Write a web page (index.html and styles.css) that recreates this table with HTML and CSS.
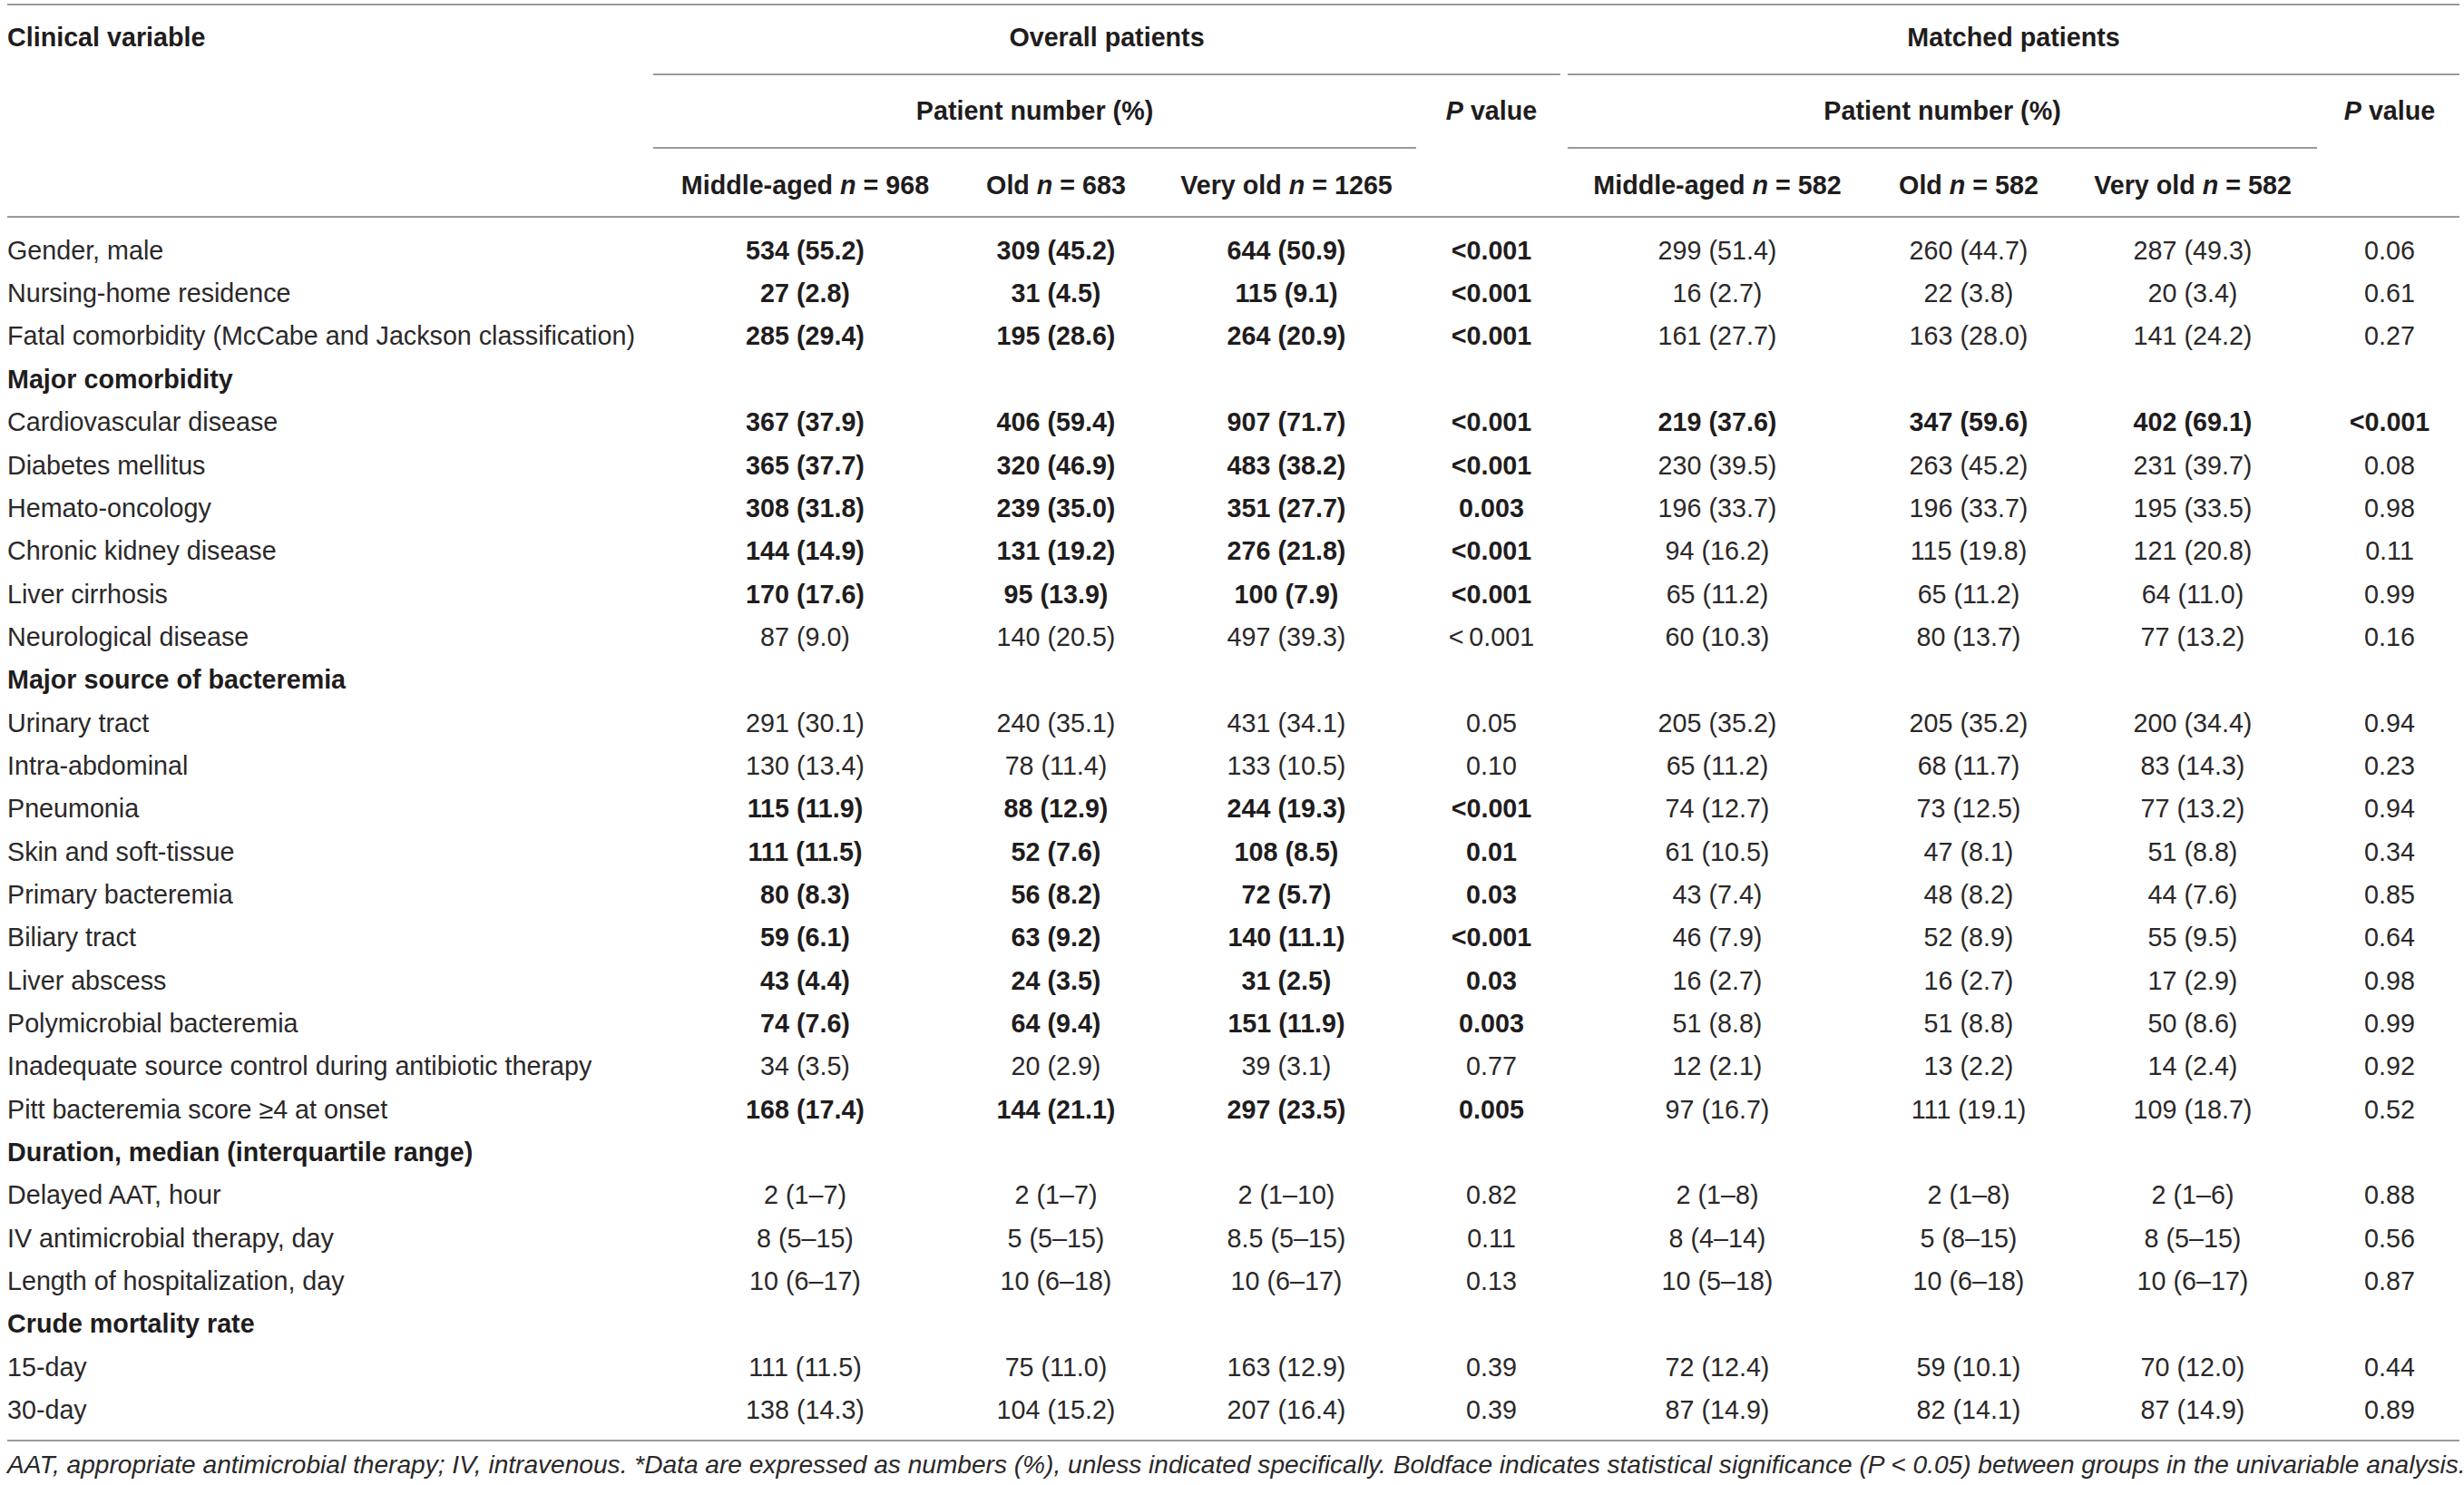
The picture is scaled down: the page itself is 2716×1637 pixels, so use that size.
FILE: index.html
```html
<!DOCTYPE html>
<html lang="en">
<head>
<meta charset="utf-8">
<title>Clinical variables table</title>
<link rel="stylesheet" href="styles.css">
</head>
<body>
<div class="page">
<table class="t">
  <colgroup>
    <col class="c-lbl"><col class="c2"><col class="c3"><col class="c4"><col class="c5">
    <col class="c6"><col class="c7"><col class="c8"><col class="c9">
  </colgroup>
  <thead>
    <tr class="r1">
      <th rowspan="3" class="lbl-h">Clinical variable</th>
      <th colspan="4" class="grp grp-o"><div class="line">Overall patients</div></th>
      <th colspan="4" class="grp grp-m"><div class="line">Matched patients</div></th>
    </tr>
    <tr class="r2">
      <th colspan="3" class="pn pn-o"><div class="line">Patient number (%)</div></th>
      <th rowspan="2" class="pv"><i>P</i> value</th>
      <th colspan="3" class="pn pn-m"><div class="line">Patient number (%)</div></th>
      <th rowspan="2" class="pv"><i>P</i> value</th>
    </tr>
    <tr class="sub">
      <th>Middle-aged <i>n</i> = 968</th>
      <th>Old <i>n</i> = 683</th>
      <th>Very old <i>n</i> = 1265</th>
      <th>Middle-aged <i>n</i> = 582</th>
      <th>Old <i>n</i> = 582</th>
      <th>Very old <i>n</i> = 582</th>
    </tr>
  </thead>
  <tbody>
    <tr class="first"><td class="l">Gender, male</td><td class="s">534 (55.2)</td><td class="s">309 (45.2)</td><td class="s">644 (50.9)</td><td class="s">&lt;0.001</td><td>299 (51.4)</td><td>260 (44.7)</td><td>287 (49.3)</td><td>0.06</td></tr>
    <tr><td class="l">Nursing-home residence</td><td class="s">27 (2.8)</td><td class="s">31 (4.5)</td><td class="s">115 (9.1)</td><td class="s">&lt;0.001</td><td>16 (2.7)</td><td>22 (3.8)</td><td>20 (3.4)</td><td>0.61</td></tr>
    <tr><td class="l">Fatal comorbidity (McCabe and Jackson classification)</td><td class="s">285 (29.4)</td><td class="s">195 (28.6)</td><td class="s">264 (20.9)</td><td class="s">&lt;0.001</td><td>161 (27.7)</td><td>163 (28.0)</td><td>141 (24.2)</td><td>0.27</td></tr>
    <tr class="sec"><td class="l">Major comorbidity</td><td></td><td></td><td></td><td></td><td></td><td></td><td></td><td></td></tr>
    <tr><td class="l">Cardiovascular disease</td><td class="s">367 (37.9)</td><td class="s">406 (59.4)</td><td class="s">907 (71.7)</td><td class="s">&lt;0.001</td><td class="s">219 (37.6)</td><td class="s">347 (59.6)</td><td class="s">402 (69.1)</td><td class="s">&lt;0.001</td></tr>
    <tr><td class="l">Diabetes mellitus</td><td class="s">365 (37.7)</td><td class="s">320 (46.9)</td><td class="s">483 (38.2)</td><td class="s">&lt;0.001</td><td>230 (39.5)</td><td>263 (45.2)</td><td>231 (39.7)</td><td>0.08</td></tr>
    <tr><td class="l">Hemato-oncology</td><td class="s">308 (31.8)</td><td class="s">239 (35.0)</td><td class="s">351 (27.7)</td><td class="s">0.003</td><td>196 (33.7)</td><td>196 (33.7)</td><td>195 (33.5)</td><td>0.98</td></tr>
    <tr><td class="l">Chronic kidney disease</td><td class="s">144 (14.9)</td><td class="s">131 (19.2)</td><td class="s">276 (21.8)</td><td class="s">&lt;0.001</td><td>94 (16.2)</td><td>115 (19.8)</td><td>121 (20.8)</td><td>0.11</td></tr>
    <tr><td class="l">Liver cirrhosis</td><td class="s">170 (17.6)</td><td class="s">95 (13.9)</td><td class="s">100 (7.9)</td><td class="s">&lt;0.001</td><td>65 (11.2)</td><td>65 (11.2)</td><td>64 (11.0)</td><td>0.99</td></tr>
    <tr><td class="l">Neurological disease</td><td>87 (9.0)</td><td>140 (20.5)</td><td>497 (39.3)</td><td>&lt;&thinsp;0.001</td><td>60 (10.3)</td><td>80 (13.7)</td><td>77 (13.2)</td><td>0.16</td></tr>
    <tr class="sec"><td class="l">Major source of bacteremia</td><td></td><td></td><td></td><td></td><td></td><td></td><td></td><td></td></tr>
    <tr><td class="l">Urinary tract</td><td>291 (30.1)</td><td>240 (35.1)</td><td>431 (34.1)</td><td>0.05</td><td>205 (35.2)</td><td>205 (35.2)</td><td>200 (34.4)</td><td>0.94</td></tr>
    <tr><td class="l">Intra-abdominal</td><td>130 (13.4)</td><td>78 (11.4)</td><td>133 (10.5)</td><td>0.10</td><td>65 (11.2)</td><td>68 (11.7)</td><td>83 (14.3)</td><td>0.23</td></tr>
    <tr><td class="l">Pneumonia</td><td class="s">115 (11.9)</td><td class="s">88 (12.9)</td><td class="s">244 (19.3)</td><td class="s">&lt;0.001</td><td>74 (12.7)</td><td>73 (12.5)</td><td>77 (13.2)</td><td>0.94</td></tr>
    <tr><td class="l">Skin and soft-tissue</td><td class="s">111 (11.5)</td><td class="s">52 (7.6)</td><td class="s">108 (8.5)</td><td class="s">0.01</td><td>61 (10.5)</td><td>47 (8.1)</td><td>51 (8.8)</td><td>0.34</td></tr>
    <tr><td class="l">Primary bacteremia</td><td class="s">80 (8.3)</td><td class="s">56 (8.2)</td><td class="s">72 (5.7)</td><td class="s">0.03</td><td>43 (7.4)</td><td>48 (8.2)</td><td>44 (7.6)</td><td>0.85</td></tr>
    <tr><td class="l">Biliary tract</td><td class="s">59 (6.1)</td><td class="s">63 (9.2)</td><td class="s">140 (11.1)</td><td class="s">&lt;0.001</td><td>46 (7.9)</td><td>52 (8.9)</td><td>55 (9.5)</td><td>0.64</td></tr>
    <tr><td class="l">Liver abscess</td><td class="s">43 (4.4)</td><td class="s">24 (3.5)</td><td class="s">31 (2.5)</td><td class="s">0.03</td><td>16 (2.7)</td><td>16 (2.7)</td><td>17 (2.9)</td><td>0.98</td></tr>
    <tr><td class="l">Polymicrobial bacteremia</td><td class="s">74 (7.6)</td><td class="s">64 (9.4)</td><td class="s">151 (11.9)</td><td class="s">0.003</td><td>51 (8.8)</td><td>51 (8.8)</td><td>50 (8.6)</td><td>0.99</td></tr>
    <tr><td class="l">Inadequate source control during antibiotic therapy</td><td>34 (3.5)</td><td>20 (2.9)</td><td>39 (3.1)</td><td>0.77</td><td>12 (2.1)</td><td>13 (2.2)</td><td>14 (2.4)</td><td>0.92</td></tr>
    <tr><td class="l">Pitt bacteremia score &ge;4 at onset</td><td class="s">168 (17.4)</td><td class="s">144 (21.1)</td><td class="s">297 (23.5)</td><td class="s">0.005</td><td>97 (16.7)</td><td>111 (19.1)</td><td>109 (18.7)</td><td>0.52</td></tr>
    <tr class="sec"><td class="l">Duration, median (interquartile range)</td><td></td><td></td><td></td><td></td><td></td><td></td><td></td><td></td></tr>
    <tr><td class="l">Delayed AAT, hour</td><td>2 (1–7)</td><td>2 (1–7)</td><td>2 (1–10)</td><td>0.82</td><td>2 (1–8)</td><td>2 (1–8)</td><td>2 (1–6)</td><td>0.88</td></tr>
    <tr><td class="l">IV antimicrobial therapy, day</td><td>8 (5–15)</td><td>5 (5–15)</td><td>8.5 (5–15)</td><td>0.11</td><td>8 (4–14)</td><td>5 (8–15)</td><td>8 (5–15)</td><td>0.56</td></tr>
    <tr><td class="l">Length of hospitalization, day</td><td>10 (6–17)</td><td>10 (6–18)</td><td>10 (6–17)</td><td>0.13</td><td>10 (5–18)</td><td>10 (6–18)</td><td>10 (6–17)</td><td>0.87</td></tr>
    <tr class="sec"><td class="l">Crude mortality rate</td><td></td><td></td><td></td><td></td><td></td><td></td><td></td><td></td></tr>
    <tr><td class="l">15-day</td><td>111 (11.5)</td><td>75 (11.0)</td><td>163 (12.9)</td><td>0.39</td><td>72 (12.4)</td><td>59 (10.1)</td><td>70 (12.0)</td><td>0.44</td></tr>
    <tr class="last"><td class="l">30-day</td><td>138 (14.3)</td><td>104 (15.2)</td><td>207 (16.4)</td><td>0.39</td><td>87 (14.9)</td><td>82 (14.1)</td><td>87 (14.9)</td><td>0.89</td></tr>
  </tbody>
</table>
<p class="foot">AAT, appropriate antimicrobial therapy; IV, intravenous. *Data are expressed as numbers (%), unless indicated specifically. Boldface indicates statistical significance (P &lt; 0.05) between groups in the univariable analysis.</p>
</div>
</body>
</html>
```

FILE: styles.css
```css
html, body {
  margin: 0;
  padding: 0;
  background: #ffffff;
}

body {
  font-family: "Liberation Sans", Arial, Helvetica, sans-serif;
  color: #2b2829;
}

.page {
  padding: 4px 0 0 8px;
}

.t {
  border-collapse: separate;
  border-spacing: 0;
  table-layout: fixed;
  width: 2703px;
  font-size: 28.7px;
  border-top: 2px solid #9b9b9b;
  border-bottom: 2px solid #9b9b9b;
}

.c-lbl { width: 710px; }
.c2 { width: 339px; }
.c3 { width: 214px; }
.c4 { width: 294px; }
.c5 { width: 158px; }
.c6 { width: 340px; }
.c7 { width: 214px; }
.c8 { width: 280px; }
.c9 { width: 154px; }

th {
  font-weight: 700;
  color: #1f1c1d;
  padding: 0;
  text-align: center;
  vertical-align: top;
  white-space: nowrap;
}

.lbl-h {
  text-align: left;
  line-height: 70px;
  border-bottom: 2px solid #9b9b9b;
}

.grp .line {
  height: 75px;
  line-height: 70px;
  border-bottom: 2px solid #9b9b9b;
}

.grp-o .line { margin: 0 3px 0 2px; }
.grp-m .line { margin: 0 0 0 5px; }

.pn .line {
  height: 79px;
  line-height: 79px;
  border-bottom: 2px solid #9b9b9b;
}

.pn-o .line { margin: 0 4px 0 2px; }
.pn-m .line { margin: 0 3px 0 5px; }

.pv {
  line-height: 79px;
  border-bottom: 2px solid #9b9b9b;
}

.sub th {
  padding-top: 6px;
  line-height: 68px;
  border-bottom: 2px solid #9b9b9b;
}

td {
  padding: 0;
  line-height: 47.34px;
  text-align: center;
  white-space: nowrap;
  vertical-align: top;
}

td.l {
  text-align: left;
}

td.s,
.sec td {
  font-weight: 700;
  color: #1f1c1d;
}

tr.first td {
  padding-top: 12.8px;
}

tr.last td {
  padding-bottom: 8.6px;
}

.foot {
  margin: 0;
  padding-top: 6px;
  font-style: italic;
  font-size: 28.1px;
  line-height: 40px;
  white-space: nowrap;
}
```
